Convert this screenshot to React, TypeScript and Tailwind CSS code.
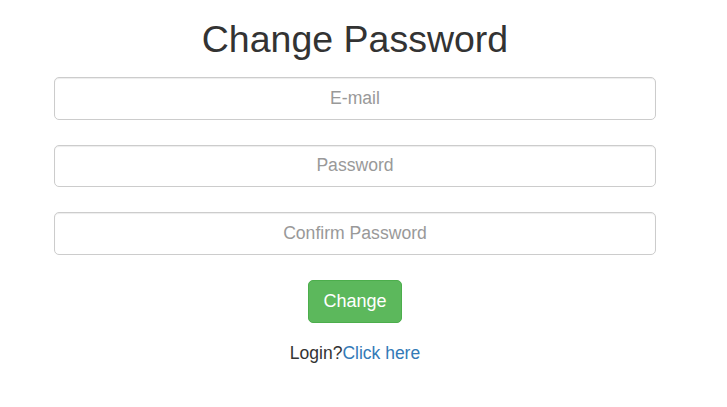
export default function App() {
  return (
    <div className="min-h-screen bg-white font-['Liberation_Sans',Arial,sans-serif] text-[#333]">
      <div className="ml-[54px] w-[602px] flex flex-col items-center">
        <h1 className="mt-[19px] h-[41px] text-[37.5px] leading-[40px] font-normal text-[#333]">
          Change Password
        </h1>
        <form className="w-full mt-[17px] flex flex-col gap-[25px]">
          <input
            type="email"
            placeholder="E-mail"
            className="w-full h-[42.5px] rounded-[5px] border border-[#ccc] bg-white text-center text-[17.6px] placeholder:text-[#999] shadow-[inset_0_1px_1px_rgba(0,0,0,0.075)] outline-none"
          />
          <input
            type="password"
            placeholder="Password"
            className="w-full h-[42.5px] rounded-[5px] border border-[#ccc] bg-white text-center text-[17.6px] placeholder:text-[#999] shadow-[inset_0_1px_1px_rgba(0,0,0,0.075)] outline-none"
          />
          <input
            type="password"
            placeholder="Confirm Password"
            className="w-full h-[42.5px] rounded-[5px] border border-[#ccc] bg-white text-center text-[17.6px] placeholder:text-[#999] shadow-[inset_0_1px_1px_rgba(0,0,0,0.075)] outline-none"
          />
          <div className="flex justify-center">
            <button
              type="button"
              className="w-[94px] h-[43px] rounded-[5px] border border-[#4cae4c] bg-[#5cb85c] text-white text-[18px]"
            >
              Change
            </button>
          </div>
        </form>
        <p className="mt-[18px] text-[17.5px] leading-[24px]">
          Login?<a href="#" className="text-[#337ab7]">Click here</a>
        </p>
      </div>
    </div>
  );
}
